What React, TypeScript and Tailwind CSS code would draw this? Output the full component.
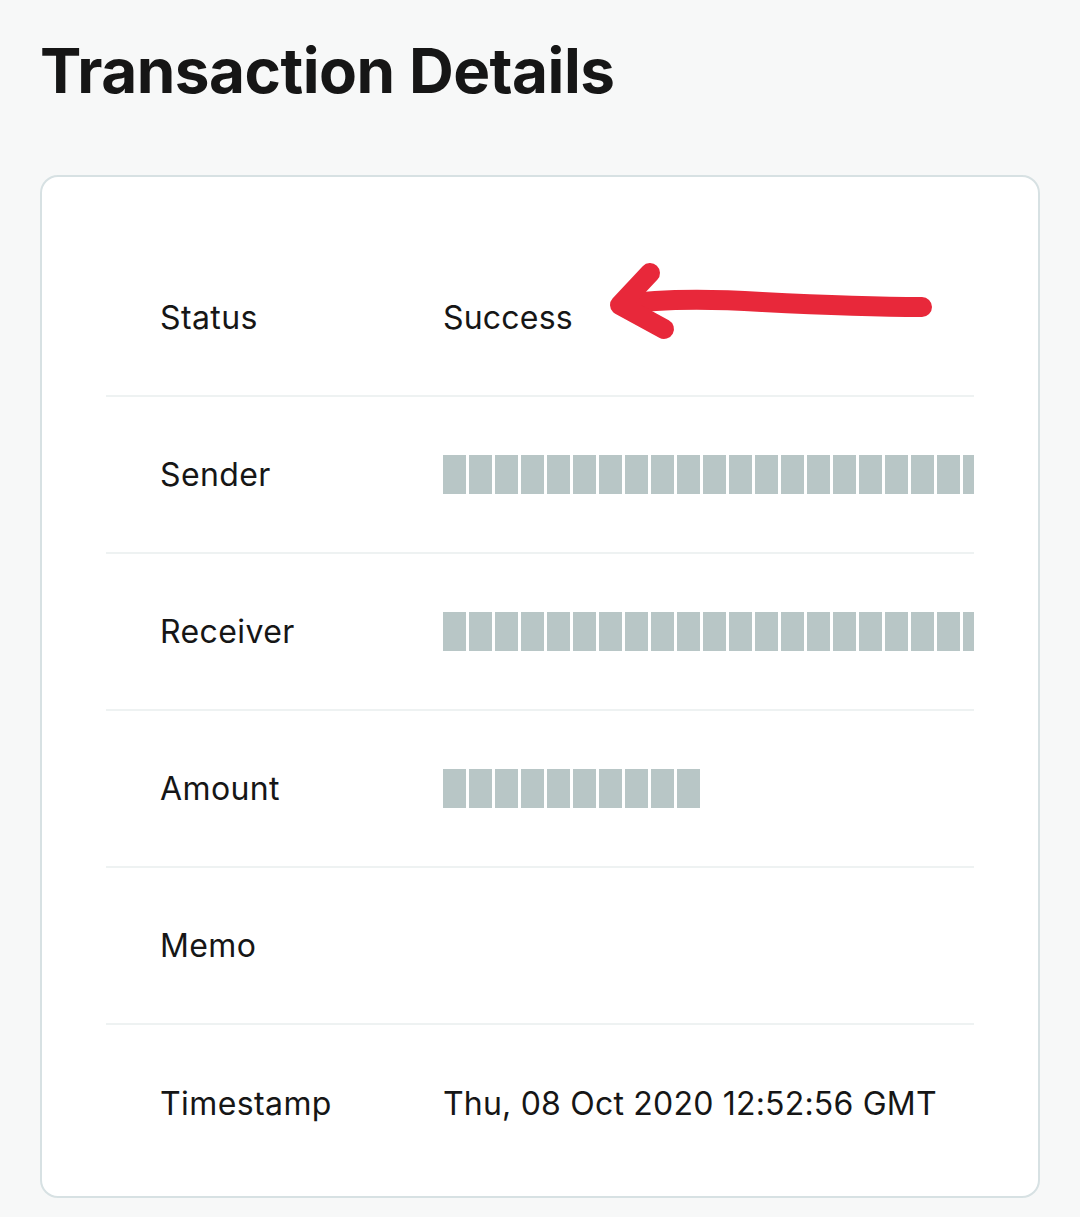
const rows = [
  { label: "Status", value: "Success" },
  { label: "Sender", blocks: 21 },
  { label: "Receiver", blocks: 21 },
  { label: "Amount", blocks: 10 },
  { label: "Memo", value: "" },
  { label: "Timestamp", value: "Thu, 08 Oct 2020 12:52:56 GMT" },
];

const Masked = ({ count }: { count: number }) => (
  <div className="flex h-[39px] flex-1 gap-[3px] overflow-hidden">
    {Array.from({ length: count }).map((_, i) => (
      <div key={i} className="h-full w-[23px] shrink-0 bg-[#b8c6c6]" />
    ))}
  </div>
);

export default function App() {
  return (
    <div className="min-h-[1217px] w-full bg-[#f7f8f8] px-10 pt-[40px] font-['Inter',sans-serif] text-[#161616]">
      <h1 className="text-[62px] font-bold leading-[62px] tracking-[-0.5px]">Transaction Details</h1>

      <div className="relative mt-[73px] rounded-[18px] border-2 border-[#d7e1e3] bg-white px-[64px] pb-[14px] pt-[63px]">
        {rows.map((r, i) => (
          <div
            key={r.label}
            className={
              "flex h-[157px] items-center pl-[54px] " +
              (i < rows.length - 1 ? "border-b-2 border-[#eef2f2]" : "")
            }
          >
            <div className="w-[283px] shrink-0 text-[32px] tracking-[0.4px]">{r.label}</div>
            {r.blocks ? (
              <Masked count={r.blocks} />
            ) : (
              <div className="text-[32px] tracking-[0.2px]">{r.value}</div>
            )}
          </div>
        ))}

        {/* red arrow drawn over the card */}
        <svg
          className="pointer-events-none absolute left-[560px] top-[80px]"
          width="360"
          height="100"
          viewBox="0 0 360 100"
          fill="none"
        >
          <path
            d="M320 50 C 260 50, 200 47, 160 45 C 110 42, 60 41, 20 48"
            stroke="#e8283a"
            strokeWidth="20"
            strokeLinecap="round"
          />
          <path
            d="M48 16 L 18 48 L 62 72"
            stroke="#e8283a"
            strokeWidth="20"
            strokeLinecap="round"
            strokeLinejoin="round"
          />
        </svg>
      </div>
    </div>
  );
}
